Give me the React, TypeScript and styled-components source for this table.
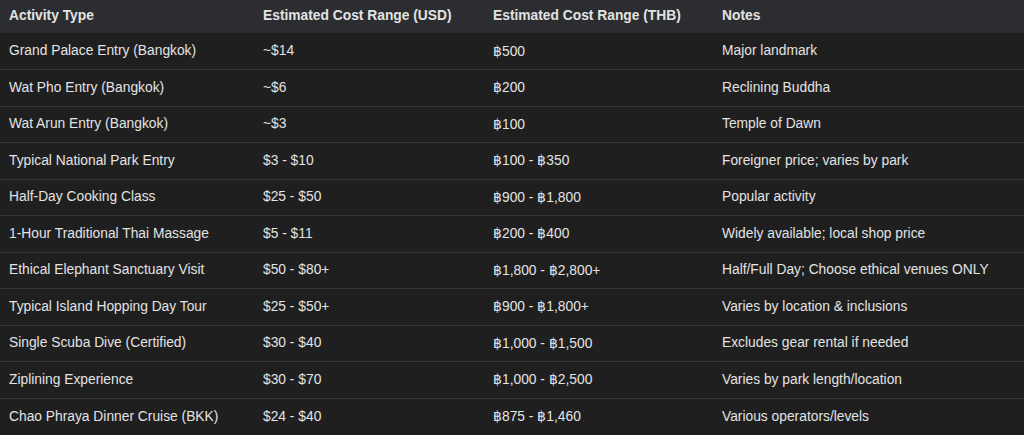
import React from "react";
import styled, { createGlobalStyle } from "styled-components";

const GlobalStyle = createGlobalStyle`
  html, body {
    margin: 0;
    padding: 0;
    background: #1f1f1f;
  }
  body {
    font-family: "Liberation Sans", Arial, sans-serif;
  }
  *, *::before, *::after {
    box-sizing: border-box;
  }
`;

const rows: [string, string, string, string][] = [
  ["Grand Palace Entry (Bangkok)", "~$14", "฿500", "Major landmark"],
  ["Wat Pho Entry (Bangkok)", "~$6", "฿200", "Reclining Buddha"],
  ["Wat Arun Entry (Bangkok)", "~$3", "฿100", "Temple of Dawn"],
  ["Typical National Park Entry", "$3 - $10", "฿100 - ฿350", "Foreigner price; varies by park"],
  ["Half-Day Cooking Class", "$25 - $50", "฿900 - ฿1,800", "Popular activity"],
  ["1-Hour Traditional Thai Massage", "$5 - $11", "฿200 - ฿400", "Widely available; local shop price"],
  ["Ethical Elephant Sanctuary Visit", "$50 - $80+", "฿1,800 - ฿2,800+", "Half/Full Day; Choose ethical venues ONLY"],
  ["Typical Island Hopping Day Tour", "$25 - $50+", "฿900 - ฿1,800+", "Varies by location & inclusions"],
  ["Single Scuba Dive (Certified)", "$30 - $40", "฿1,000 - ฿1,500", "Excludes gear rental if needed"],
  ["Ziplining Experience", "$30 - $70", "฿1,000 - ฿2,500", "Varies by park length/location"],
  ["Chao Phraya Dinner Cruise (BKK)", "$24 - $40", "฿875 - ฿1,460", "Various operators/levels"],
];

const Table = styled.table`
  width: 1024px;
  border-collapse: collapse;
  table-layout: fixed;
  color: #e3e3e3;
  font-size: 13.8px;
`;

const HeadRow = styled.tr`
  background: #2c2d30;
  height: 33px;
`;

const Th = styled.th<{ $w: number }>`
  width: ${(p) => p.$w}px;
  text-align: left;
  font-weight: 700;
  font-size: 13.8px;
  padding: 0 9px 2px;
  white-space: nowrap;
`;

const Row = styled.tr`
  height: 36.5px;
  background: #1f1f1f;
  border-top: 1px solid #353535;
  &:first-child {
    border-top: none;
  }
`;

const Td = styled.td`
  padding: 0 9px 1px;
  white-space: nowrap;
`;

const widths = [254, 230, 229, 311];
const headers = ["Activity Type", "Estimated Cost Range (USD)", "Estimated Cost Range (THB)", "Notes"];

export default function App() {
  return (
    <>
      <GlobalStyle />
      <Table>
        <thead>
          <HeadRow>
            {headers.map((h, i) => (
              <Th key={h} $w={widths[i]}>
                {h}
              </Th>
            ))}
          </HeadRow>
        </thead>
        <tbody>
          {rows.map((r) => (
            <Row key={r[0]}>
              {r.map((c, i) => (
                <Td key={i}>{c}</Td>
              ))}
            </Row>
          ))}
        </tbody>
      </Table>
    </>
  );
}
